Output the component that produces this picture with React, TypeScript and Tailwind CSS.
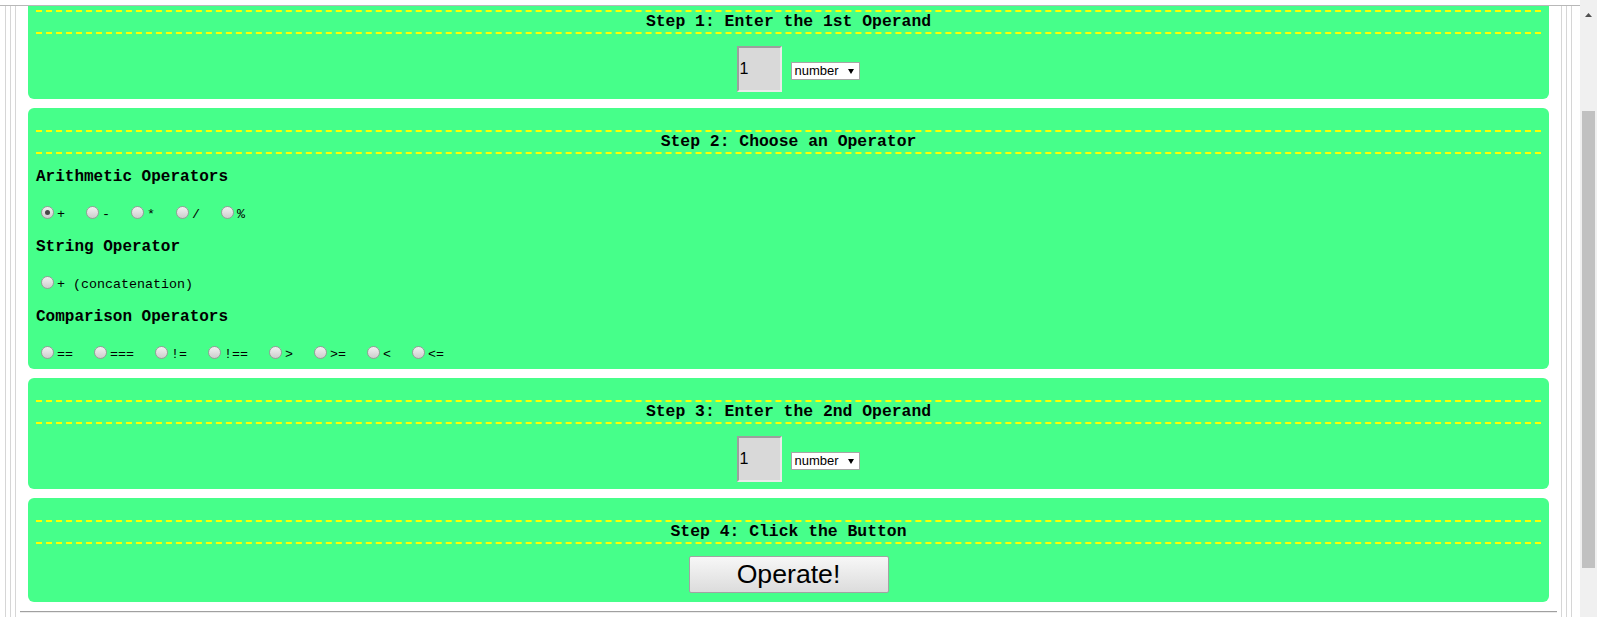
import React from "react";

const mono = "font-['Liberation_Mono','Courier_New',monospace]";
const sans = "font-['Liberation_Sans',Arial,sans-serif]";

function Radio({ checked }: { checked?: boolean }) {
  return (
    <span className="ml-[5px] mr-[3px] w-[13px] h-[13px] shrink-0 rounded-full border border-[#9a9a9a] bg-linear-to-b from-[#f2f2f2] to-[#cdcdcd] flex items-center justify-center">
      {checked && <span className="w-[5px] h-[5px] rounded-full bg-[#474747]" />}
    </span>
  );
}

function Opt({ label, checked }: { label: string; checked?: boolean }) {
  return (
    <span className="flex items-center h-[13px]">
      <Radio checked={checked} />
      <span className="whitespace-pre translate-y-[2px]">{label + "  "}</span>
    </span>
  );
}

function Title({ children }: { children: React.ReactNode }) {
  return (
    <div
      className={`h-[24px] border-y-2 border-dashed border-[#ffff00] text-center leading-[20px] text-[16.4px] font-bold text-black ${mono}`}
    >
      {children}
    </div>
  );
}

function Operand() {
  return (
    <div className="mt-[12px] flex justify-center items-center gap-[9px] pl-[19px]">
      <input
        readOnly
        defaultValue="1"
        className={`w-[45px] h-[46px] bg-[#d9d9d9] border-2 border-t-[#9e9e9e] border-l-[#9e9e9e] border-r-[#ebebeb] border-b-[#ebebeb] pl-[1px] text-[16px] text-black outline-none ${sans}`}
      />
      <div
        className={`translate-y-[2px] w-[69px] h-[18px] bg-white border border-[#a6a6a6] flex items-center justify-between pl-[3px] pr-[5px] text-[13px] leading-[16px] text-black ${sans}`}
      >
        <span>number</span>
        <svg width="6" height="5" viewBox="0 0 6 5">
          <path d="M0 0 H6 L3 5 Z" fill="#000" />
        </svg>
      </div>
    </div>
  );
}

function Heading({ children, first }: { children: React.ReactNode; first?: boolean }) {
  return (
    <div
      className={`${first ? "mt-[13px]" : ""} h-[20px] leading-[20px] text-[16px] font-bold text-black ${mono}`}
    >
      {children}
    </div>
  );
}

export default function App() {
  const card = "mx-[12px] rounded-[6px] bg-[#46ff8a] px-[8px] pt-[22px]";
  const row = `flex h-[50px] pt-[19px] leading-[13px] text-[13.33px] text-black ${mono}`;
  return (
    <div className="w-[1597px] h-[617px] overflow-hidden flex bg-white">
      <div className="w-[1580px] h-full flex flex-col">
        <div className="h-[5px] shrink-0" />
        <div className="h-px shrink-0 bg-[#b8b8b8]" />
        <div className="flex-1 min-h-0 pl-[5px] pr-[8px]">
          <div className="h-full border-x border-[#d6d6d6] px-[4px]">
            <div className="h-full border-x border-[#d6d6d6] px-[4px]">
              <div className="h-full border-x border-[#d6d6d6] overflow-hidden">
                <div className="-mt-[18px] flex flex-col gap-[9px]">
                  <div className={`${card} pb-[7px]`}>
                    <Title>Step 1: Enter the 1st Operand</Title>
                    <Operand />
                  </div>

                  <div className={`${card} pb-0`}>
                    <Title>Step 2: Choose an Operator</Title>
                    <Heading first>Arithmetic Operators</Heading>
                    <div className={row}>
                      <Opt label="+" checked />
                      <Opt label="-" />
                      <Opt label="*" />
                      <Opt label="/" />
                      <Opt label="%" />
                    </div>
                    <Heading>String Operator</Heading>
                    <div className={row}>
                      <Opt label="+ (concatenation)" />
                    </div>
                    <Heading>Comparison Operators</Heading>
                    <div className={`${row} !h-[42px]`}>
                      <Opt label="==" />
                      <Opt label="===" />
                      <Opt label="!=" />
                      <Opt label="!==" />
                      <Opt label=">" />
                      <Opt label=">=" />
                      <Opt label="<" />
                      <Opt label="<=" />
                    </div>
                  </div>

                  <div className={`${card} pb-[7px]`}>
                    <Title>Step 3: Enter the 2nd Operand</Title>
                    <Operand />
                  </div>

                  <div className={`${card} pb-[9px]`}>
                    <Title>Step 4: Click the Button</Title>
                    <div className="mt-[12px] flex justify-center">
                      <button
                        className={`w-[200px] h-[37px] border border-[#a3a3a3] rounded-[2px] bg-linear-to-b from-[#f7f7f7] to-[#dcdcdc] text-[26.67px] leading-none text-black ${sans}`}
                      >
                        Operate!
                      </button>
                    </div>
                  </div>

                  <div className="mx-[4px] h-[2px] border-t border-[#a0a0a0] border-b border-b-[#ececec]" />
                </div>
              </div>
            </div>
          </div>
        </div>
      </div>
      <div className="w-[17px] h-full bg-[#f0f0f0] flex flex-col items-center">
        <svg className="mt-[13px] shrink-0" width="7" height="4" viewBox="0 0 7 4">
          <path d="M3.5 0 L7 4 H0 Z" fill="#505050" />
        </svg>
        <div className="mt-[94px] w-[13px] h-[457px] shrink-0 bg-[#c1c1c1]" />
      </div>
    </div>
  );
}
